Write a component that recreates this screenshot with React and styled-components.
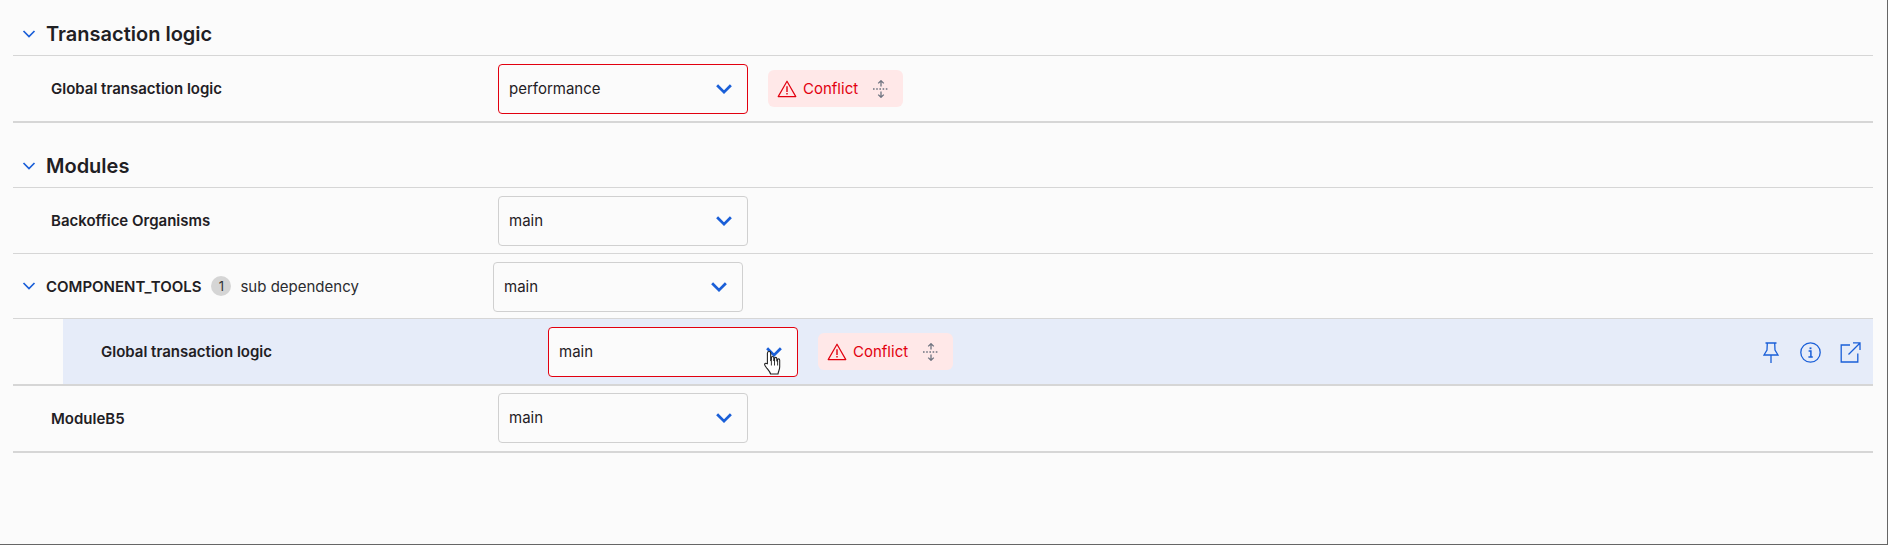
import React from 'react';
import styled, { createGlobalStyle } from 'styled-components';

const Global = createGlobalStyle`
  html, body { margin: 0; padding: 0; height: 100%; }
  body { background: #fbfbfb; font-family: Inter, "Noto Sans", sans-serif; color: #1f2024; overflow: hidden; }
`;

const Page = styled.div`
  position: relative;
  box-sizing: border-box;
  width: 1888px;
  height: 545px;
  padding: 13px 14px 0 13px;
  border-right: 1px solid #666;
  border-bottom: 1px solid #666;
`;

const Section = styled.section`
  & + & { margin-top: 22px; }
`;

const SectionHead = styled.div`
  display: flex;
  align-items: center;
  height: 42px;
  box-sizing: content-box;
  border-bottom: 1px solid #d6d6d6;
`;

const Toggle = styled.span`
  display: flex;
  align-items: center;
  justify-content: center;
  box-sizing: border-box;
  width: 33px;
  height: 16px;
  padding-right: 2px;
  flex: none;
  color: #1a5fd8;
`;

const SectionTitle = styled.h2`
  margin: 0;
  font-size: 20px;
  font-weight: 600;
  line-height: 28px;
  color: #1f2024;
`;

const Row = styled.div`
  display: flex;
  align-items: center;
  box-sizing: border-box;
  height: ${p => p.$height}px;
  padding: ${p => (p.$raised ? '0 0 1px' : '1px 0 0')};
  margin-left: ${p => (p.$nested ? 50 : 0)}px;
  background: ${p => (p.$nested ? '#e6ecf9' : 'transparent')};
  border-bottom: ${p => (p.$nested ? 0 : p.$last ? 2 : 1)}px solid #d6d6d6;
`;

const NestedGroup = styled.div`
  border-bottom: 2px solid #d6d6d6;
`;

const LabelCell = styled.div`
  display: flex;
  align-items: center;
  flex: none;
  box-sizing: border-box;
  width: ${p => p.$width || 485}px;
  padding-left: ${p => (p.$plain ? 0 : 38)}px;
  margin-top: ${p => (p.$flush ? 0 : -1)}px;
`;

const RowLabel = styled.span`
  font-size: 15px;
  font-weight: 600;
  color: #1f2024;
`;

const CountBadge = styled.span`
  display: inline-flex;
  align-items: center;
  justify-content: center;
  width: 20px;
  height: 20px;
  margin: 0 9px 0 10px;
  border-radius: 50%;
  background: #d5d5d5;
  font-size: 13px;
  color: #333;
`;

const SubText = styled.span`
  font-size: 15px;
  color: #2b2c30;
`;

const Select = styled.div`
  display: flex;
  align-items: center;
  justify-content: space-between;
  box-sizing: border-box;
  flex: none;
  width: 250px;
  height: 50px;
  padding: 0 13px 0 10px;
  background: #fbfbfb;
  border: 1px solid ${p => (p.$error ? '#e2000f' : '#d0d0d0')};
  border-radius: 4px;
  font-size: 15px;
  color: #1f2024;
`;

const SelectValue = styled.span`
  margin-top: -1px;
`;

const ConflictBadge = styled.div`
  display: flex;
  align-items: center;
  box-sizing: border-box;
  width: 135px;
  height: 37px;
  margin: -1px 0 0 20px;
  padding-left: 9px;
  border-radius: 6px;
  background: #ffe8e8;
  color: #e2000f;
  font-size: 15px;
`;

const ConflictText = styled.span`
  margin-left: 6px;
  margin-right: 15px;
`;

const Actions = styled.div`
  display: flex;
  align-items: center;
  gap: 19px;
  margin-left: auto;
  padding-right: 12px;
  color: #1a5fd8;
`;

const PinSlot = styled.span`
  display: flex;
  margin-right: 2px;
`;

const Cursor = styled.svg`
  position: absolute;
  left: 763px;
  top: 350px;
`;

const SelectChevron = styled.span`
  display: flex;
  color: #1a5fd8;
`;

const Chevron = ({ size = 16, w = 1.7 }) => (
  <svg width={size} height={size} viewBox="0 0 16 16" fill="none" stroke="currentColor" strokeWidth={w}>
    <path d="M2.5 5 8 10.5 13.5 5" />
  </svg>
);

const Warning = () => (
  <svg width="20" height="18" viewBox="0 0 20 18" fill="none" stroke="#e2000f" strokeWidth="1.2" strokeLinejoin="round">
    <path d="M10 1.2 18.8 16.6H1.2Z" />
    <path d="M10 6.3v5.6M10 13v1.4" strokeWidth="1.4" />
  </svg>
);

const MergeIcon = () => (
  <svg width="16" height="18" viewBox="0 0 16 18" fill="none" stroke="#6f7480" strokeWidth="1.3">
    <path d="M0 9h16" strokeDasharray="1.6 1.6" />
    <path d="M8 .8v5.7M5.2 3.4 8 .7l2.8 2.7M8 11.5v5.7M5.2 14.6 8 17.3l2.8-2.7" />
  </svg>
);

const Pin = () => (
  <svg width="16" height="21" viewBox="0 0 16 21" fill="none" stroke="currentColor" strokeWidth="1.3">
    <path d="M2.5 1h11M4.3 1 4 8 1 13h14l-3-5-.3-7M8 13v8" />
  </svg>
);

const Info = () => (
  <svg width="21" height="21" viewBox="0 0 21 21" fill="none" stroke="currentColor" strokeWidth="1.3">
    <circle cx="10.5" cy="10.5" r="9.7" />
    <path d="M8.6 9h2.3v5.8M8.4 14.9h4.4" strokeWidth="1.5" />
    <path d="M10.5 5.4v1.8" strokeWidth="1.9" />
  </svg>
);

const External = () => (
  <svg width="21" height="21" viewBox="0 0 21 21" fill="none" stroke="currentColor" strokeWidth="1.3">
    <path d="M10 3H1.2v17h16.6v-8.5M8.5 12.5 19.8 1.2M13 .9h7v7" />
  </svg>
);

const HandCursor = () => (
  <Cursor width="20" height="26" viewBox="0 0 20 26">
    <path
      d="M6 1.5c1 0 1.7.7 1.7 1.7v7.2l.7-.2V7.7c0-1.7 2.4-1.7 2.4 0v2.7l.7.1V8.6c0-1.6 2.3-1.6 2.3 0v2.2l.7.2V10c0-1.5 2.2-1.5 2.2.2v6.6c0 3-1.3 4.2-1.7 7.2H7.6c-.5-2-2.1-3.6-3.6-5.6-1-1.3-3-3.4-2.3-4.5.8-1.2 2.6-.2 2.6-.2l.1-.3V3.2C4.4 2.2 5 1.5 6 1.5Z"
      fill="#fff"
      stroke="#222"
      strokeWidth="1.1"
    />
    <path d="M8.4 10.5v5M11.5 10.5v5M14.6 11v4.5" stroke="#222" strokeWidth=".9" />
  </Cursor>
);

const SelectBox = ({ value, error }) => (
  <Select $error={error}>
    <SelectValue>{value}</SelectValue>
    <SelectChevron><Chevron size={20} w={2.2} /></SelectChevron>
  </Select>
);

const Conflict = () => (
  <ConflictBadge>
    <Warning />
    <ConflictText>Conflict</ConflictText>
    <MergeIcon />
  </ConflictBadge>
);

export default function App() {
  return (
    <Page>
      <Global />
      <Section>
        <SectionHead>
          <Toggle><Chevron /></Toggle>
          <SectionTitle>Transaction logic</SectionTitle>
        </SectionHead>
        <Row $last $height={67}>
          <LabelCell><RowLabel>Global transaction logic</RowLabel></LabelCell>
          <SelectBox value="performance" error />
          <Conflict />
        </Row>
      </Section>
      <Section>
        <SectionHead>
          <Toggle><Chevron /></Toggle>
          <SectionTitle>Modules</SectionTitle>
        </SectionHead>
        <Row $height={66}>
          <LabelCell><RowLabel>Backoffice Organisms</RowLabel></LabelCell>
          <SelectBox value="main" />
        </Row>
        <Row $height={65}>
          <LabelCell $plain $width={480}>
            <Toggle><Chevron /></Toggle>
            <RowLabel>COMPONENT_TOOLS</RowLabel>
            <CountBadge>1</CountBadge>
            <SubText>sub dependency</SubText>
          </LabelCell>
          <SelectBox value="main" />
        </Row>
        <NestedGroup>
          <Row $nested $height={65}>
            <LabelCell><RowLabel>Global transaction logic</RowLabel></LabelCell>
            <SelectBox value="main" error />
            <Conflict />
            <Actions>
              <PinSlot><Pin /></PinSlot>
              <Info />
              <External />
            </Actions>
          </Row>
        </NestedGroup>
        <Row $last $raised $height={67}>
          <LabelCell $flush><RowLabel>ModuleB5</RowLabel></LabelCell>
          <SelectBox value="main" />
        </Row>
      </Section>
      <HandCursor />
    </Page>
  );
}
